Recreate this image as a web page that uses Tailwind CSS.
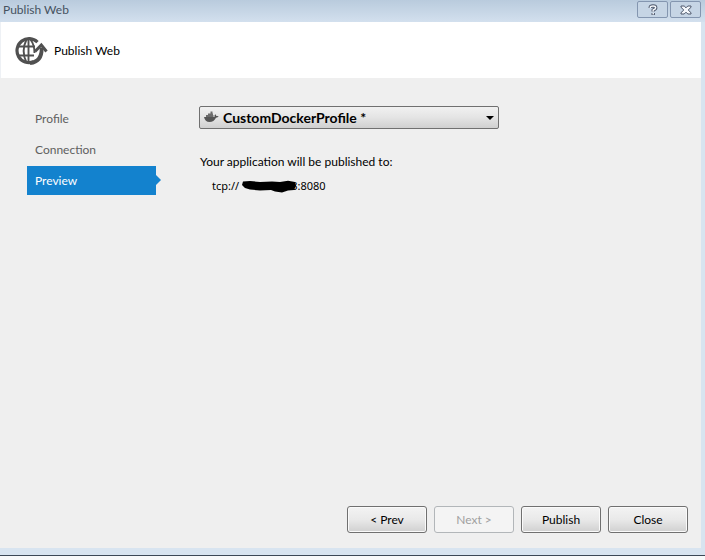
<!DOCTYPE html>
<html lang="en">
<head>
    <meta charset="UTF-8">
    <meta name="viewport" content="width=device-width, initial-scale=1.0">
    <title>Publish Web</title>
    <script src="https://cdn.jsdelivr.net/npm/@tailwindcss/browser@4"></script>
</head>
<body class="min-h-screen flex flex-col bg-[#f8f9fa] pb-1 font-['Lato','Noto_Sans',sans-serif] text-[12px] leading-4 text-black">
    <div class="flex-1 flex flex-col bg-[#d8e4f0] border-b border-[#3c4856] pb-[7px]">
        <!-- Title bar -->
        <div class="h-[22px] flex items-start justify-between bg-linear-to-b from-[#b9cbdd] to-[#d3e0ee] pl-[3px] pr-1">
            <h1 class="pt-[2px] text-[#46525f]">Publish Web</h1>
            <div class="flex gap-[2px] pt-px">
                <button type="button" aria-label="Help" class="w-[31px] h-[17px] flex items-center justify-center rounded-xs border border-[#8496b0] bg-[#c6d5e5]">
                    <svg class="w-3 h-3" viewBox="0 0 12 12" fill="none" stroke-linejoin="round">
                        <path d="M3.3 4V3.2Q3.5 2 6 2Q8.7 2 8.7 3.7Q8.7 5 6.2 6V7.5M6.2 9V11" stroke="#4c566a" stroke-width="3.4" />
                        <path d="M3.3 4V3.2Q3.5 2 6 2Q8.7 2 8.7 3.7Q8.7 5 6.2 6V7.5M6.2 9V10.5" stroke="#f4f7fb" stroke-width="1.5" />
                    </svg>
                </button>
                <button type="button" aria-label="Close window" class="w-[31px] h-[17px] flex items-center justify-center rounded-xs border border-[#8496b0] bg-[#c6d5e5]">
                    <svg class="w-3 h-[10px]" viewBox="0 0 12 10">
                        <path d="M1 1H4.2L6 2.8L7.8 1H11V2.3L8.2 5L11 7.7V9H7.8L6 7.2L4.2 9H1V7.7L3.8 5L1 2.3Z" fill="#f4f7fb" stroke="#4c566a" />
                    </svg>
                </button>
            </div>
        </div>

        <div class="flex-1 flex flex-col mr-1 bg-[#efefef]">
            <!-- Header -->
            <header class="h-14 flex items-center gap-[6px] bg-white pl-[14px] pt-px border-l border-[#eef1f5]">
                <svg class="w-[33px] h-[30px]" viewBox="0 0 33 30" fill="none" stroke="#505050">
                    <path d="M22.5 6.2A12 12 0 1 0 18.5 25.8" stroke-width="3.2" />
                    <path d="M3 10.5H20M3 19.5H19M13.5 3V27" stroke-width="1.9" />
                    <path d="M11.5 3.5Q5.8 15 11.5 26.5M15.5 3.5Q19.6 9 19.5 17" stroke-width="1.9" />
                    <path d="M15 27.2Q27.2 25.5 26.6 12" stroke-width="3.8" />
                    <path d="M20 15.5L26.3 9L31.5 15.5" stroke-width="3" />
                </svg>
                <h2>Publish Web</h2>
            </header>

            <main class="flex-1 flex pt-[26px] pl-[27px]">
                <!-- Steps -->
                <nav class="w-[129px] shrink-0 flex flex-col gap-[2px] text-[#606060]">
                    <a href="#profile" class="h-[29px] flex items-center pl-2">Profile</a>
                    <a href="#connection" class="h-[29px] flex items-center pl-2">Connection</a>
                    <a href="#preview" aria-current="step" class="relative h-[29px] flex items-center pl-2 bg-[#1382ce] text-white">
                        Preview
                        <svg class="absolute left-full top-[9px] w-[5px] h-[10px]" viewBox="0 0 5 10" fill="#1382ce"><path d="M0 0L5 5L0 10Z" /></svg>
                    </a>
                </nav>

                <!-- Preview -->
                <section class="flex-1 pl-[43px] pt-[2px]">
                    <div class="relative w-[300px] h-[23px]">
                        <select id="profile" aria-label="Profile" class="appearance-none w-full h-full rounded-xs border border-[#707070] bg-linear-to-b from-[#f1f1f1] from-0% via-[#e4e4e4] via-50% to-[#d0d0d0] pl-[23px] pr-6 text-[14px] font-bold">
                            <option>CustomDockerProfile *</option>
                        </select>
                        <svg class="absolute left-[5px] top-[5px] w-[15px] h-[12px] pointer-events-none" viewBox="0 0 15 12" fill="#555">
                            <path d="M0 6H10.5Q10.2 4.3 11.2 3.2Q12.2 3.8 12.3 5Q13.5 4.7 14.7 5.3Q14 6.7 12 6.8Q10 11 5.5 11Q1 11 0 6Z" />
                            <path d="M2 4H9.5V6H2ZM4 2.4H9V4H4ZM6.5 0.5H8.5V2.4H6.5Z" fill="#6c6c6c" />
                        </svg>
                        <svg class="absolute right-[5px] top-[10px] w-[8px] h-[4px] pointer-events-none" viewBox="0 0 8 4"><path d="M0 0H8L4 4Z" /></svg>
                    </div>
                    <p class="mt-[25px] pl-px">Your application will be published to:</p>
                    <p class="mt-2 pl-[13px] flex items-center font-['Noto_Sans',sans-serif] text-[11px]">
                        <span>tcp://</span>
                        <!-- redacted host -->
                        <svg role="img" aria-label="Hidden address" class="w-[56px] h-[13px] ml-[3px] -mr-[7px] z-10" viewBox="0 0 56 13">
                            <path d="M1 1.5L8 1L18 2L30 1.5L38 2L46 .8L53 2L54 6L52 10L46 10.5L40 12.5L33 11.5L29 10L18 10.5L8 9.5L3 8L0 5Z" />
                        </svg>
                        <span>3:8080</span>
                    </p>
                </section>
            </main>

            <!-- Buttons -->
            <footer class="flex justify-end gap-[7px] pr-[13px] pb-[15px]">
                <button type="button" class="w-20 h-[27px] rounded-[3px] border border-[#707070] bg-linear-to-b from-[#f3f3f3] from-0% via-[#e9e9e9] via-50% to-[#d0d0d0] shadow-[inset_0_0_0_1px_#fafafa]">&lt; Prev</button>
                <button type="button" disabled class="w-20 h-[27px] rounded-[3px] border border-[#b2b6b9] bg-[#f4f4f4] text-[#a0a0a0]">Next &gt;</button>
                <button type="button" class="w-20 h-[27px] rounded-[3px] border border-[#707070] bg-linear-to-b from-[#f3f3f3] from-0% via-[#e9e9e9] via-50% to-[#d0d0d0] shadow-[inset_0_0_0_1px_#fafafa]">Publish</button>
                <button type="button" class="w-20 h-[27px] rounded-[3px] border border-[#707070] bg-linear-to-b from-[#f3f3f3] from-0% via-[#e9e9e9] via-50% to-[#d0d0d0] shadow-[inset_0_0_0_1px_#fafafa]">Close</button>
            </footer>
        </div>
    </div>
</body>
</html>
